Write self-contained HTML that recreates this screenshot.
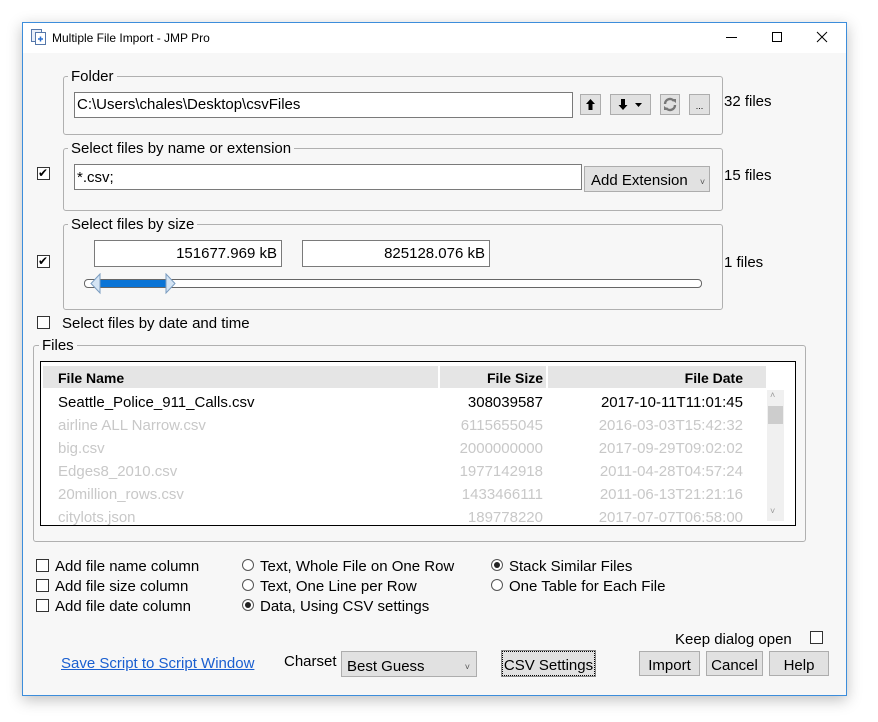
<!DOCTYPE html>
<html><head><meta charset="utf-8"><style>
*{box-sizing:border-box;margin:0;padding:0}
body{width:878px;height:722px;background:#fff;position:relative;overflow:hidden;font-family:"Liberation Sans",sans-serif;font-size:15px;color:#000}
.a{position:absolute}
.win{left:22px;top:22px;width:825px;height:674px;border:1px solid #3c8ddb;background:#f7f7f7;box-shadow:0 4px 14px rgba(0,0,0,.25)}
.title{left:23px;top:23px;width:823px;height:30px;background:#fff}
.grp{border:1px solid #b0b0b0;border-radius:3px}
.lbl{background:#f7f7f7;padding:0 3px;line-height:18px;margin-top:1px}
.inp{background:#fff;border:1px solid #7a7a7a;line-height:24px;padding:0 2px;white-space:nowrap;overflow:hidden}
.btn{background:#e1e1e1;border:1px solid #adadad;text-align:center}
.cb{width:13px;height:13px;border:1px solid #333;background:#fff}
.rd{width:12px;height:12px;border:1px solid #555;border-radius:50%;background:#fff}
.rd.on::after{content:"";position:absolute;left:2px;top:2px;width:6px;height:6px;border-radius:50%;background:#222}
.t{line-height:20px;white-space:nowrap;margin-top:2px}
.row{position:absolute;left:58px;width:710px;height:23px;line-height:23px;color:#c8c8c8}
.row span{position:absolute;white-space:nowrap}
</style></head><body>
<div class="a win"></div>
<div class="a title"></div>
<svg class="a" style="left:30px;top:28px" width="18" height="18" viewBox="0 0 18 18"><rect x="1.5" y="1.5" width="10" height="12" fill="#e8eef8" stroke="#5577aa"/><rect x="5.5" y="4.5" width="10" height="12" fill="#fff" stroke="#5577aa"/><path d="M8 11h5M10.5 8.5v5" stroke="#2a6fd0" stroke-width="1.5"/></svg>
<div class="a t" style="left:52px;top:26px;font-size:12px">Multiple File Import - JMP Pro</div>
<div class="a" style="left:726px;top:37px;width:11px;border-top:1px solid #000"></div>
<div class="a" style="left:772px;top:32px;width:10px;height:10px;border:1px solid #000"></div>
<svg class="a" style="left:816px;top:31px" width="12" height="12"><path d="M1 1L11 11M11 1L1 11" stroke="#000"/></svg>

<div class="a grp" style="left:63px;top:76px;width:660px;height:59px"></div>
<div class="a lbl" style="left:68px;top:67px">Folder</div>
<div class="a inp" style="left:74px;top:92px;width:499px;height:26px">C:\Users\chales\Desktop\csvFiles</div>
<div class="a btn" style="left:580px;top:94px;width:21px;height:21px"><svg width="19" height="19"><path d="M9.5 4L14 9H11.5V15H7.5V9H5Z" fill="#000"/></svg></div>
<div class="a btn" style="left:610px;top:94px;width:41px;height:21px"><svg width="39" height="19"><path d="M12 15L7.5 10H10V4H14V10H16.5Z" fill="#000"/><path d="M24 8h7l-3.5 4z" fill="#000"/></svg></div>
<div class="a btn" style="left:660px;top:94px;width:20px;height:21px"><svg width="18" height="19"><path d="M4 9a5 5 0 0 1 9-3M14 10a5 5 0 0 1-9 3" stroke="#777" stroke-width="2.4" fill="none"/><path d="M10 4h5v4zM8 15H3v-4z" fill="#777"/></svg></div>
<div class="a btn" style="left:689px;top:94px;width:21px;height:21px;font-size:9px;line-height:22px">...</div>
<div class="a t" style="left:724px;top:90px">32 files</div>

<div class="a grp" style="left:63px;top:148px;width:660px;height:63px"></div>
<div class="a lbl" style="left:68px;top:139px">Select files by name or extension</div>
<div class="a cb" style="left:37px;top:167px"></div><div class="a t" style="left:38px;top:161px;font-size:12px">✔</div>
<div class="a inp" style="left:74px;top:164px;width:508px;height:26px;line-height:26px">*.csv;</div>
<div class="a btn" style="left:584px;top:166px;width:126px;height:26px;line-height:28px;text-align:left;padding-left:6px">Add Extension <span style="font-size:9px;margin-left:8px;color:#555">˅</span></div>
<div class="a t" style="left:724px;top:164px">15 files</div>

<div class="a grp" style="left:63px;top:224px;width:660px;height:86px"></div>
<div class="a lbl" style="left:68px;top:215px">Select files by size</div>
<div class="a cb" style="left:37px;top:255px"></div><div class="a t" style="left:38px;top:249px;font-size:12px">✔</div>
<div class="a inp" style="left:94px;top:240px;width:188px;height:27px;line-height:26px;text-align:right;padding-right:4px">151677.969 kB</div>
<div class="a inp" style="left:302px;top:240px;width:188px;height:27px;line-height:26px;text-align:right;padding-right:4px">825128.076 kB</div>
<div class="a" style="left:84px;top:279px;width:618px;height:9px;border:1px solid #666;border-radius:4px;background:#fff"></div>
<div class="a" style="left:99px;top:280px;width:70px;height:7px;background:#0a74d6"></div>
<svg class="a" style="left:86px;top:273px" width="94" height="22"><path d="M14 1L5 10.5L14 20Z" fill="#d4e4f4" stroke="#7a9cc0"/><path d="M80 1L89 10.5L80 20Z" fill="#d4e4f4" stroke="#7a9cc0"/></svg>
<div class="a t" style="left:724px;top:251px">1 files</div>

<div class="a cb" style="left:37px;top:316px"></div>
<div class="a t" style="left:62px;top:312px">Select files by date and time</div>

<div class="a grp" style="left:33px;top:345px;width:773px;height:197px"></div>
<div class="a lbl" style="left:39px;top:336px">Files</div>
<div class="a" style="left:40px;top:361px;width:756px;height:165px;border:1px solid #000;background:#fff"></div>
<div class="a" style="left:43px;top:366px;width:395px;height:22px;background:#e5e5e5"></div>
<div class="a" style="left:440px;top:366px;width:106px;height:22px;background:#e5e5e5"></div>
<div class="a" style="left:548px;top:366px;width:218px;height:22px;background:#e5e5e5"></div>
<div class="a t" style="left:58px;top:366px;font-weight:bold;font-size:14px">File Name</div>
<div class="a t" style="left:440px;top:366px;width:103px;text-align:right;font-weight:bold;font-size:14px">File Size</div>
<div class="a t" style="left:548px;top:366px;width:195px;text-align:right;font-weight:bold;font-size:14px">File Date</div>
<div class="a" style="left:41px;top:389px;width:726px;height:136px;overflow:hidden">
<div class="row" style="left:17px;top:2px;color:#000"><span style="left:0">Seattle_Police_911_Calls.csv</span><span style="right:225px">308039587</span><span style="right:25px">2017-10-11T11:01:45</span></div>
<div class="row" style="left:17px;top:25px"><span style="left:0">airline ALL Narrow.csv</span><span style="right:225px">6115655045</span><span style="right:25px">2016-03-03T15:42:32</span></div>
<div class="row" style="left:17px;top:48px"><span style="left:0">big.csv</span><span style="right:225px">2000000000</span><span style="right:25px">2017-09-29T09:02:02</span></div>
<div class="row" style="left:17px;top:71px"><span style="left:0">Edges8_2010.csv</span><span style="right:225px">1977142918</span><span style="right:25px">2011-04-28T04:57:24</span></div>
<div class="row" style="left:17px;top:94px"><span style="left:0">20million_rows.csv</span><span style="right:225px">1433466111</span><span style="right:25px">2011-06-13T21:21:16</span></div>
<div class="row" style="left:17px;top:117px"><span style="left:0">citylots.json</span><span style="right:225px">189778220</span><span style="right:25px">2017-07-07T06:58:00</span></div>
</div>
<div class="a" style="left:767px;top:390px;width:17px;height:131px;background:#f0f0f0"></div>
<div class="a" style="left:768px;top:406px;width:15px;height:18px;background:#cdcdcd"></div>
<div class="a" style="left:770px;top:390px;font-size:9px;color:#999">˄</div>
<div class="a" style="left:770px;top:506px;font-size:9px;color:#999">˅</div>

<div class="a cb" style="left:36px;top:559px"></div><div class="a t" style="left:55px;top:555px">Add file name column</div>
<div class="a cb" style="left:36px;top:579px"></div><div class="a t" style="left:55px;top:575px">Add file size column</div>
<div class="a cb" style="left:36px;top:599px"></div><div class="a t" style="left:55px;top:595px">Add file date column</div>
<div class="a rd" style="left:242px;top:559px"></div><div class="a t" style="left:260px;top:555px">Text, Whole File on One Row</div>
<div class="a rd" style="left:242px;top:579px"></div><div class="a t" style="left:260px;top:575px">Text, One Line per Row</div>
<div class="a rd on" style="left:242px;top:599px"></div><div class="a t" style="left:260px;top:595px">Data, Using CSV settings</div>
<div class="a rd on" style="left:491px;top:559px"></div><div class="a t" style="left:509px;top:555px">Stack Similar Files</div>
<div class="a rd" style="left:491px;top:579px"></div><div class="a t" style="left:509px;top:575px">One Table for Each File</div>

<div class="a t" style="left:675px;top:628px">Keep dialog open</div>
<div class="a cb" style="left:810px;top:631px"></div>
<div class="a t" style="left:61px;top:652px;color:#1a5fd0;text-decoration:underline">Save Script to Script Window</div>
<div class="a t" style="left:284px;top:650px">Charset</div>
<div class="a btn" style="left:341px;top:651px;width:136px;height:26px;line-height:30px;text-align:left;padding-left:5px">Best Guess<span class="a" style="right:6px;top:0;font-size:9px;color:#555">˅</span></div>
<div class="a btn" style="left:502px;top:651px;width:93px;height:25px;line-height:27px;border:1px dotted #000;outline:1px solid #888">CSV Settings</div>
<div class="a btn" style="left:639px;top:651px;width:61px;height:25px;line-height:27px">Import</div>
<div class="a btn" style="left:706px;top:651px;width:57px;height:25px;line-height:27px">Cancel</div>
<div class="a btn" style="left:769px;top:651px;width:60px;height:25px;line-height:27px">Help</div>
</body></html>
